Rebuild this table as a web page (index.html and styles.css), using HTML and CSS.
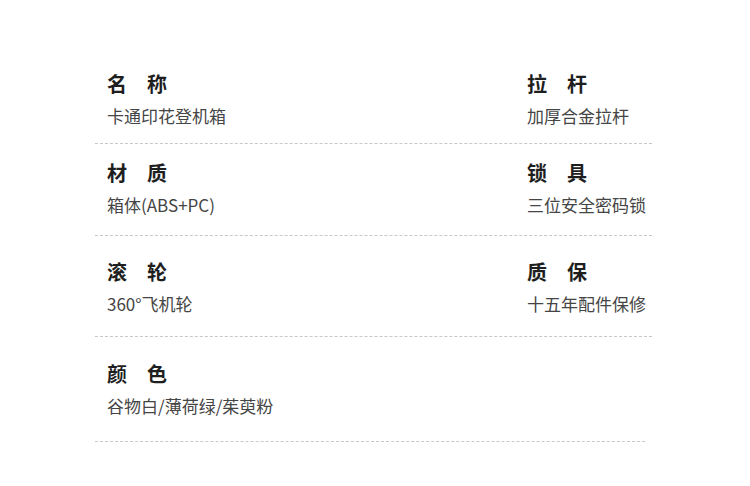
FILE: index.html
```html
<!DOCTYPE html>
<html lang="zh-CN">
<head>
<meta charset="utf-8">
<title>规格参数</title>
<link rel="stylesheet" href="styles.css">
</head>
<body>
<div class="specs">
  <div class="row row-1">
    <div class="cell"><div class="label">名　称</div><div class="value">卡通印花登机箱</div></div>
    <div class="cell"><div class="label">拉　杆</div><div class="value">加厚合金拉杆</div></div>
  </div>
  <div class="row row-2">
    <div class="cell"><div class="label">材　质</div><div class="value">箱体(ABS+PC)</div></div>
    <div class="cell"><div class="label">锁　具</div><div class="value">三位安全密码锁</div></div>
  </div>
  <div class="row row-3">
    <div class="cell"><div class="label">滚　轮</div><div class="value">360°飞机轮</div></div>
    <div class="cell"><div class="label">质　保</div><div class="value">十五年配件保修</div></div>
  </div>
  <div class="row row-4">
    <div class="cell"><div class="label">颜　色</div><div class="value">谷物白/薄荷绿/茱萸粉</div></div>
    <div class="cell"></div>
  </div>
</div>
</body>
</html>
```

FILE: styles.css
```css
html, body {
  margin: 0;
  padding: 0;
  background: #ffffff;
}

body {
  font-family: "Noto Sans CJK SC", "Noto Sans", "Liberation Sans", sans-serif;
}

.specs {
  width: 557px;
  margin-left: 95px;
  padding-top: 72px;
}

.row {
  display: grid;
  grid-template-columns: 420px 1fr;
  padding-left: 12px;
  border-bottom: 1px dashed #c8c8c8;
}

.cell {
  display: flex;
  flex-direction: column;
  gap: 8px;
}

.label {
  font-size: 20px;
  line-height: 24px;
  font-weight: 600;
  color: #1e1e1e;
  white-space: nowrap;
}

.value {
  font-size: 17px;
  line-height: 24px;
  color: #454545;
  white-space: nowrap;
}

.row-1 { padding-top: 0; padding-bottom: 15px; }
.row-2 { padding-top: 17px; padding-bottom: 18px; }
.row-3 { padding-top: 24px; padding-bottom: 20px; }
.row-4 { padding-top: 25px; padding-bottom: 23px; margin-right: 7px; }
```
